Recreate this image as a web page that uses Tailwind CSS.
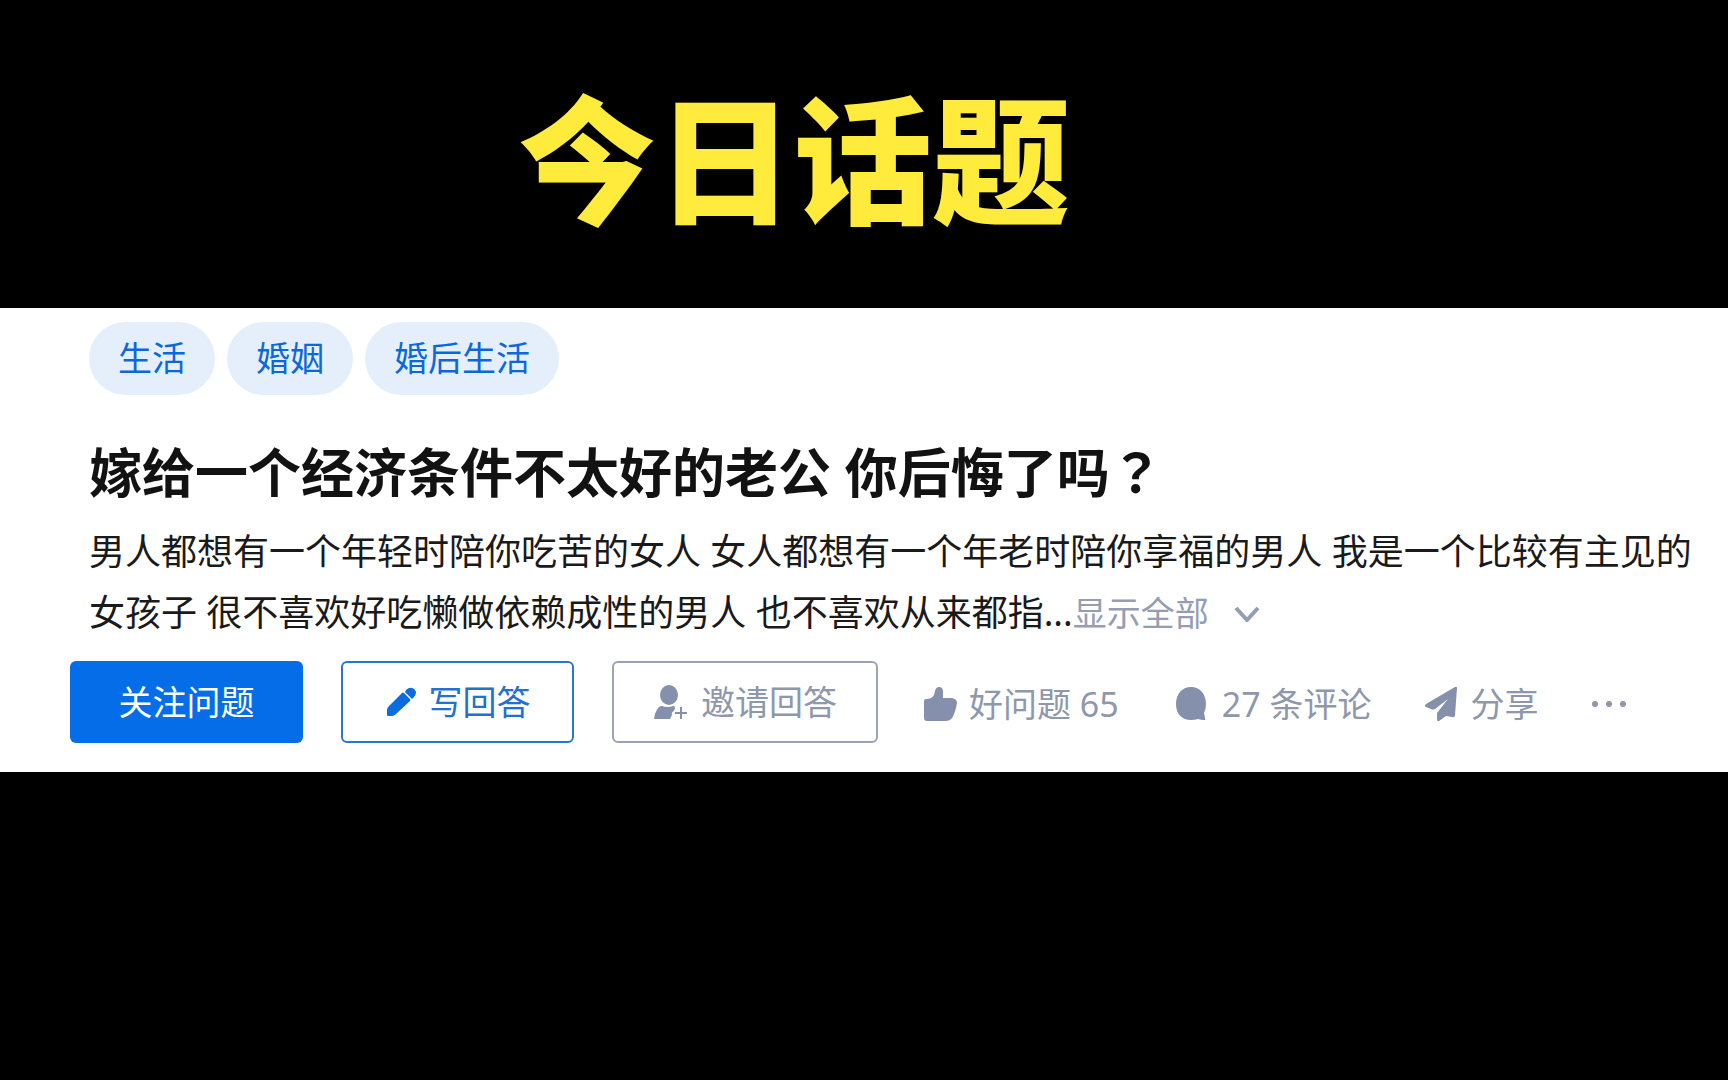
<!DOCTYPE html>
<html lang="zh-CN">
  <head>
    <meta charset="UTF-8" />
    <meta name="viewport" content="width=device-width, initial-scale=1.0" />
    <title>今日话题</title>
    <!-- Tailwind CSS via CDN -->
    <script src="https://cdn.jsdelivr.net/npm/@tailwindcss/browser@4"></script>
  </head>
  <body
    class="min-h-screen bg-black font-['Noto_Sans','Noto_Sans_CJK_SC',sans-serif]"
  >
    <!-- banner -->
    <header class="flex h-[308px] justify-center pt-[67px] pr-[140px]">
      <h1
        class="font-['Noto_Sans_CJK_SC',sans-serif] text-[138px] leading-[172px] font-black whitespace-nowrap text-[#ffeb3b]"
      >
        今日话题
      </h1>
    </header>

    <!-- question card -->
    <main class="bg-white pt-[14px] pb-[29px]">
      <div class="pl-[89px]">
        <nav class="flex gap-3 text-[34px] leading-[73px] text-[#0b68dc]">
          <a href="#" class="rounded-full bg-[#e5effc] px-[29px]">生活</a>
          <a href="#" class="rounded-full bg-[#e5effc] px-[29px]">婚姻</a>
          <a href="#" class="rounded-full bg-[#e5effc] px-[29px]">婚后生活</a>
        </nav>

        <!-- the TC face centers the question mark -->
        <h2
          class="mt-10 text-[53px] leading-[76px] font-bold whitespace-nowrap text-[#121212]"
        >
          嫁给一个经济条件不太好的老公 你后悔了吗<span
            lang="zh-TW"
            class="font-['Noto_Sans_CJK_TC',sans-serif] leading-none"
            >？</span
          >
        </h2>

        <p
          class="mt-[10px] text-[36px] leading-[61px] whitespace-nowrap text-[#1a1a1a]"
        >
          男人都想有一个年轻时陪你吃苦的女人 女人都想有一个年老时陪你享福的男人
          我是一个比较有主见的<br />女孩子 很不喜欢好吃懒做依赖成性的男人
          也不喜欢从来都指...<button
            type="button"
            class="inline-flex items-center gap-6 text-[34px] text-[#949db2]"
          >
            显示全部
            <svg class="h-4 w-7" viewBox="0 0 28 16" fill="none">
              <path
                d="M3 2l11 12L25 2"
                stroke="currentColor"
                stroke-width="4"
              />
            </svg>
          </button>
        </p>
      </div>

      <!-- actions -->
      <div
        class="mt-[17px] flex items-center pl-[70px] text-[34px] whitespace-nowrap text-[#8e97ab]"
      >
        <div class="flex gap-[38px]">
          <button
            type="button"
            class="h-[82px] w-[233px] rounded-md bg-[#056de8] text-white"
          >
            关注问题
          </button>
          <button
            type="button"
            class="flex h-[82px] w-[233px] items-center justify-center gap-3 rounded-md border-2 border-[#2b76cf] text-[#2270d0]"
          >
            <svg class="h-8 w-8" viewBox="0 0 32 32" fill="#0b6be0">
              <path
                d="M2 29v-5q0-2 2-4L17 7q1-1 2 0l6 6q1 1 0 2L11 28q-2 2-4 2l-4 0q-1 0-1-1z"
              />
              <path d="M21 4q4-4 8-1t0 8l-2 2-7-7z" />
            </svg>
            写回答
          </button>
          <button
            type="button"
            class="flex h-[82px] w-[266px] items-center justify-center gap-[14px] rounded-md border-2 border-[#9aa3b6]"
          >
            <svg class="h-[34px] w-[34px]" viewBox="0 0 34 34" fill="#8590ac">
              <ellipse cx="16" cy="10" rx="9" ry="10" />
              <path
                d="M1 34q1-8 5-12 1-1 3-1 6 2 11 0 2 0 2 2l-1 3q-3 1-2 4l-2 4z"
              />
              <path d="M28 22v12M22 28h12" stroke="#8590ac" stroke-width="2" />
            </svg>
            邀请回答
          </button>
        </div>

        <div class="flex items-center pt-1 pl-[46px]">
          <button type="button" class="flex items-center gap-3">
            <svg class="h-[34px] w-[33px]" viewBox="0 0 33 34" fill="#8590ac">
              <path
                d="M0 14q0-2 2-2 6 0 8-4l1-4q1-4 4-4 4 0 4 5v6h9q5 1 5 5-1 7-3 11-2 7-8 7H3q-3 0-3-3z"
              />
            </svg>
            好问题 65
          </button>
          <button type="button" class="ml-[57px] flex items-center gap-4">
            <svg class="h-[34px] w-[30px]" viewBox="0 0 30 34" fill="#8590ac">
              <path
                d="M15 0C6 0 0 7 0 17S6 33 15 33q4 0 7-1 3 1 6 1 2 0 1-2l-1-5q2-4 2-9C30 7 24 0 15 0z"
              />
            </svg>
            27 条评论
          </button>
          <button type="button" class="ml-[53px] flex items-center gap-[14px]">
            <svg class="h-9 w-8" viewBox="0 0 32 36" fill="#8590ac">
              <path
                d="M30 1q2-1 2 1l-2 27q0 3-3 2l-6-1-7 5q-2 1-2-2v-6l11-14L10 23q-2 1-4 0l-5-2q-2-1 0-3z"
              />
            </svg>
            分享
          </button>
          <button type="button" aria-label="更多" class="ml-[53px]">
            <svg class="h-8 w-[34px]" viewBox="0 0 34 32" fill="#8e97ab">
              <circle cx="3" cy="16" r="3" />
              <circle cx="17" cy="16" r="3" />
              <circle cx="31" cy="16" r="3" />
            </svg>
          </button>
        </div>
      </div>
    </main>
  </body>
</html>
